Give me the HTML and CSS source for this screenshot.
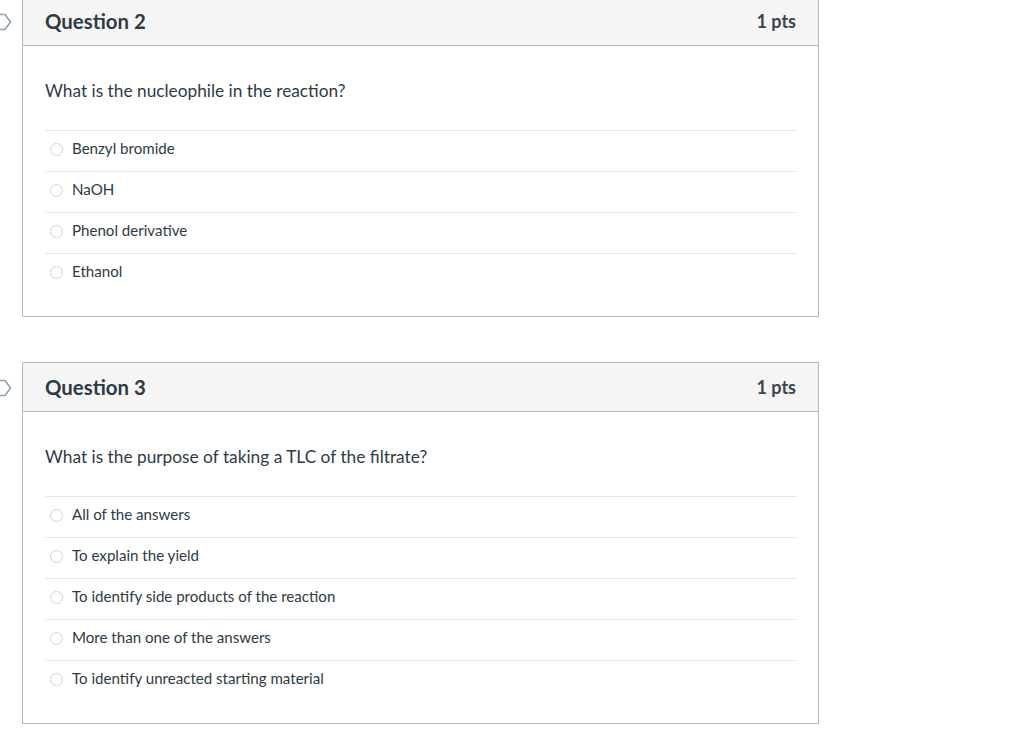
FILE: index.html
```html
<!DOCTYPE html>
<html>
<head>
<meta charset="utf-8">
<link rel="stylesheet" href="styles.css">
</head>
<body>
<div class="page">
  <div class="question">
    <svg class="flag" width="20" height="18" viewBox="0 0 20 18"><path d="M1.5 1.5 H12 L17.5 9 L12 16.5 H1.5 Z" fill="none" stroke="#8da2b8" stroke-width="1.6" stroke-linejoin="round"/></svg>
    <div class="header">
      <h2 class="title">Question 2</h2>
      <span class="pts">1 pts</span>
    </div>
    <div class="body">
      <p class="text">What is the nucleophile in the reaction?</p>
      <ul class="answers">
        <li class="answer"><span class="radio"></span>Benzyl bromide</li>
        <li class="answer"><span class="radio"></span>NaOH</li>
        <li class="answer"><span class="radio"></span>Phenol derivative</li>
        <li class="answer"><span class="radio"></span>Ethanol</li>
      </ul>
    </div>
  </div>
  <div class="question">
    <svg class="flag" width="20" height="18" viewBox="0 0 20 18"><path d="M1.5 1.5 H12 L17.5 9 L12 16.5 H1.5 Z" fill="none" stroke="#8da2b8" stroke-width="1.6" stroke-linejoin="round"/></svg>
    <div class="header">
      <h2 class="title">Question 3</h2>
      <span class="pts">1 pts</span>
    </div>
    <div class="body">
      <p class="text">What is the purpose of taking a TLC of the filtrate?</p>
      <ul class="answers">
        <li class="answer"><span class="radio"></span>All of the answers</li>
        <li class="answer"><span class="radio"></span>To explain the yield</li>
        <li class="answer"><span class="radio"></span>To identify side products of the reaction</li>
        <li class="answer"><span class="radio"></span>More than one of the answers</li>
        <li class="answer"><span class="radio"></span>To identify unreacted starting material</li>
      </ul>
    </div>
  </div>
</div>
</body>
</html>
```
FILE: styles.css
```css
html, body {
  margin: 0;
  padding: 0;
  background: #fff;
}
body {
  font-family: Lato, "Noto Sans", sans-serif;
  color: #2d3b45;
}
.page {
  margin-top: -4px;
  padding-left: 22px;
}
.question {
  position: relative;
  width: 795px;
  border: 1px solid #b4b9bd;
  margin-bottom: 45px;
}
.flag {
  position: absolute;
  left: -30px;
  top: 16px;
}
.header {
  height: 48px;
  background: #f5f5f5;
  border-bottom: 1px solid #b4b9bd;
  display: flex;
  align-items: center;
  justify-content: space-between;
  padding: 0 22px 0 22px;
}
.title {
  margin: 0;
  font-size: 20.4px;
  font-weight: 700;
  line-height: 24px;
}
.pts {
  font-size: 18px;
  font-weight: 700;
  color: #3d454c;
}
.body {
  padding: 0 21px 22px 22px;
}
.text {
  margin: 33px 0 27px 0;
  font-size: 17.3px;
  line-height: 24px;
}
.answers {
  list-style: none;
  margin: 0;
  padding: 0;
}
.answer {
  border-top: 1px solid #e3e5e7;
  display: flex;
  align-items: flex-start;
  font-size: 15.1px;
  line-height: 20px;
  padding-top: 7px;
  height: 33px;
}
.radio {
  width: 11px;
  height: 11px;
  border: 1px solid #d0d4d7;
  border-radius: 50%;
  margin: 5px 9px 0 5px;
  flex: none;
  background: #fff;
}
```
